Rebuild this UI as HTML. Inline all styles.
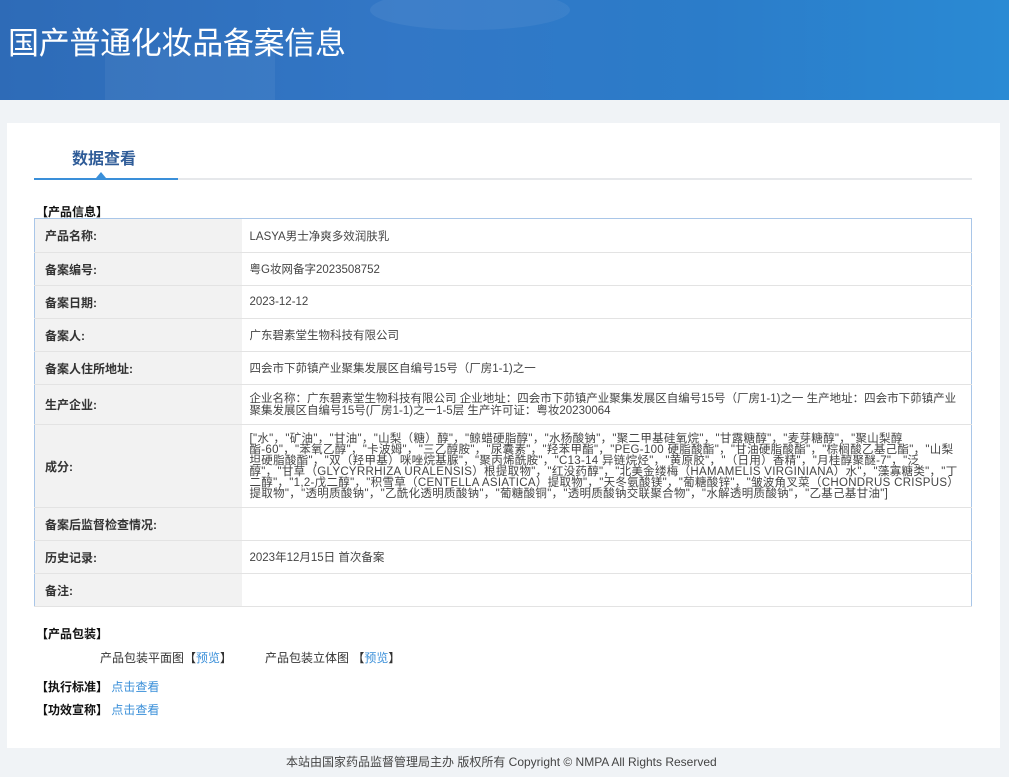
<!DOCTYPE html>
<html><head><meta charset="utf-8"><style>
*{margin:0;padding:0;box-sizing:border-box}
body{width:1009px;height:777px;background:#f0f3f6;font-family:"Liberation Sans","Noto Sans CJK SC",sans-serif;font-size:12px;color:#333;position:relative;overflow:hidden}
.hd{position:absolute;left:0;top:0;width:1009px;height:100px;background:linear-gradient(90deg,#2e6bb7 0%,#3277c6 40%,#2b7cc9 70%,#2a8ad4 100%);overflow:hidden}
.hd h1{position:absolute;left:8px;top:18px;font-size:31px;font-weight:normal;color:#fff;font-family:"Noto Sans CJK SC",sans-serif;letter-spacing:-0.3px}
.card{position:absolute;left:7px;top:123px;width:993px;height:625px;background:#fff}
.tab{position:absolute;left:72px;top:145px;font-size:16px;font-weight:bold;color:#2f5c98}
.ul{position:absolute;left:34px;top:178px;width:938px;height:2px;background:#e6e8eb}
.ul i{position:absolute;left:0;top:0;width:144px;height:2px;background:#3a8fd9}
.tri{position:absolute;left:96px;top:172px;width:0;height:0;border-left:5px solid transparent;border-right:5px solid transparent;border-bottom:6px solid #3a8fd9}
.sec{position:absolute;font-weight:bold;color:#111;font-size:12px}
table{position:absolute;left:34px;top:218px;width:938px;border-collapse:collapse;border:1px solid #a9c6e8}
td{border-bottom:1px solid #e3e3e3;vertical-align:middle;padding:0 10px}
td.l{width:207px;background:#f2f2f2;font-weight:bold;color:#333;padding-left:10px}
td.v{color:#444;font-size:11.5px;padding-left:8px}
.ing{font-size:11px;line-height:11px;padding-top:2px;letter-spacing:0.3px}
a{color:#3a8fd9;text-decoration:none}
.ft{position:absolute;top:753px;left:286px;font-size:12px;color:#444}
</style></head><body>
<div class="hd"><div style="position:absolute;left:105px;top:50px;width:170px;height:60px;background:rgba(255,255,255,0.05)"></div><div style="position:absolute;left:370px;top:-10px;width:200px;height:40px;border-radius:50%;background:rgba(255,255,255,0.06)"></div><h1>国产普通化妆品备案信息</h1></div>
<div class="card"></div>
<div class="tab">数据查看</div>
<div class="ul"><i></i></div><div class="tri"></div>
<div class="sec" style="left:36px;top:203px">【产品信息】</div>
<table>
<tr style="height:34px"><td class="l">产品名称:</td><td class="v">LASYA男士净爽多效润肤乳</td></tr>
<tr style="height:33px"><td class="l">备案编号:</td><td class="v">粤G妆网备字2023508752</td></tr>
<tr style="height:33px"><td class="l">备案日期:</td><td class="v">2023-12-12</td></tr>
<tr style="height:33px"><td class="l">备案人:</td><td class="v">广东碧素堂生物科技有限公司</td></tr>
<tr style="height:33px"><td class="l">备案人住所地址:</td><td class="v">四会市下茆镇产业聚集发展区自编号15号（厂房1-1)之一</td></tr>
<tr style="height:40px"><td class="l">生产企业:</td><td class="v" style="line-height:12px">企业名称：广东碧素堂生物科技有限公司 企业地址：四会市下茆镇产业聚集发展区自编号15号（厂房1-1)之一 生产地址：四会市下茆镇产业聚集发展区自编号15号(厂房1-1)之一1-5层 生产许可证：粤妆20230064</td></tr>
<tr style="height:83px"><td class="l">成分:</td><td class="v ing">["水"，"矿油"，"甘油"，"山梨（糖）醇"，"鲸蜡硬脂醇"，"水杨酸钠"，"聚二甲基硅氧烷"，"甘露糖醇"，"麦芽糖醇"，"聚山梨醇酯-60"，"苯氧乙醇"，"卡波姆"，"三乙醇胺"，"尿囊素"，"羟苯甲酯"，"PEG-100 硬脂酸酯"，"甘油硬脂酸酯"，"棕榈酸乙基己酯"，"山梨坦硬脂酸酯"，"双（羟甲基）咪唑烷基脲"，"聚丙烯酰胺"，"C13-14 异链烷烃"，"黄原胶"，"（日用）香精"，"月桂醇聚醚-7"，"泛醇"，"甘草（GLYCYRRHIZA URALENSIS）根提取物"，"红没药醇"，"北美金缕梅（HAMAMELIS VIRGINIANA）水"，"藻寡糖类"，"丁二醇"，"1,2-戊二醇"，"积雪草（CENTELLA ASIATICA）提取物"，"天冬氨酸镁"，"葡糖酸锌"，"皱波角叉菜（CHONDRUS CRISPUS）提取物"，"透明质酸钠"，"乙酰化透明质酸钠"，"葡糖酸铜"，"透明质酸钠交联聚合物"，"水解透明质酸钠"，"乙基己基甘油"]</td></tr>
<tr style="height:33px"><td class="l">备案后监督检查情况:</td><td class="v"></td></tr>
<tr style="height:33px"><td class="l">历史记录:</td><td class="v">2023年12月15日 首次备案</td></tr>
<tr style="height:33px"><td class="l">备注:</td><td class="v"></td></tr>
</table>
<div class="sec" style="left:36px;top:625px">【产品包装】</div>
<div style="position:absolute;left:100px;top:649px">产品包装平面图【<a>预览</a>】</div>
<div style="position:absolute;left:265px;top:649px">产品包装立体图 【<a>预览</a>】</div>
<div class="sec" style="left:36px;top:678px">【执行标准】 <a style="font-weight:normal">点击查看</a></div>
<div class="sec" style="left:36px;top:701px">【功效宣称】 <a style="font-weight:normal">点击查看</a></div>
<div class="ft">本站由国家药品监督管理局主办 版权所有 Copyright © NMPA All Rights Reserved</div>
</body></html>
